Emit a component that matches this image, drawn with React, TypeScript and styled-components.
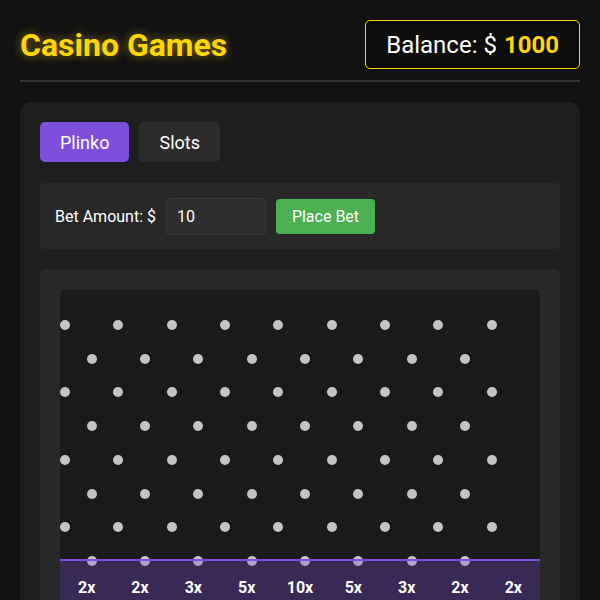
import styled, { createGlobalStyle } from "styled-components"

const GlobalStyle = createGlobalStyle`
    html, body {
        margin: 0;
        padding: 0;
        background: #121212;
        color: #ffffff;
        font-family: Roboto, "Liberation Sans", sans-serif;
    }
    * { box-sizing: border-box; }
`

const Page = styled.div`
    padding: 20px;
    height: 600px;
    overflow: hidden;
`

const Header = styled.header`
    display: flex;
    justify-content: space-between;
    align-items: center;
    padding-bottom: 11px;
    border-bottom: 2px solid #333;
    margin-bottom: 20px;

    h1 {
        margin: 0;
        font-size: 32px;
        font-weight: 700;
        color: #ffd700;
        text-shadow: 0 0 10px rgba(255, 215, 0, 0.5);
    }
`

const Balance = styled.div`
    height: 49px;
    padding: 0 20px;
    display: flex;
    align-items: center;
    border: 1px solid #ffd700;
    border-radius: 5px;
    background: #0d0d0d;
    font-size: 24px;

    span {
        color: #ffd700;
        font-weight: 700;
        margin-left: 7px;
    }
`

const Panel = styled.main`
    background: #1e1e1e;
    border-radius: 10px;
    padding: 20px;
    display: flex;
    flex-direction: column;
    gap: 20px;
`

const Tabs = styled.div`
    display: flex;
    gap: 10px;
    margin-bottom: 1px;
`

const Tab = styled.button<{ $active?: boolean }>`
    height: 40px;
    padding: 0 20px;
    border: none;
    border-radius: 5px;
    font-family: inherit;
    font-size: 18px;
    color: #fff;
    background: ${p => (p.$active ? "#7e4fdb" : "#2c2c2c")};
    cursor: pointer;
`

const BetBar = styled.div`
    background: #282828;
    border-radius: 5px;
    padding: 15px 15px 14px;
    display: flex;
    align-items: center;
    gap: 10px;

    label {
        font-size: 16px;
    }
`

const BetInput = styled.input`
    width: 100px;
    height: 37px;
    padding: 0 10px;
    background: #2e2e2e;
    border: 1px solid #3a3a3a;
    border-radius: 4px;
    color: #fff;
    font-family: inherit;
    font-size: 16px;
    outline: none;
`

const PlaceButton = styled.button`
    width: 99px;
    height: 35px;
    border: none;
    border-radius: 4px;
    background: #4caf50;
    color: #fff;
    font-family: inherit;
    font-size: 16px;
    cursor: pointer;
`

const BoardWrap = styled.div`
    background: #282828;
    border-radius: 5px;
    padding: 21px 20px 20px;
`

const Board = styled.div`
    background: #1a1a1a;
    border-radius: 5px;
    overflow: hidden;
`

const PegField = styled.div`
    position: relative;
    height: 269px;
`

const Peg = styled.div`
    position: absolute;
    width: 10px;
    height: 10px;
    margin: -5px 0 0 0;
    border-radius: 50%;
    background: #c4c4c4;
`

const Slots = styled.div`
    position: relative;
    display: grid;
    grid-template-columns: repeat(9, 1fr);
    height: 52px;
    border-top: 2px solid #7e4fdb;
    background: rgba(126, 79, 219, 0.3);
`

const Slot = styled.div`
    display: flex;
    align-items: center;
    justify-content: center;
    font-size: 16px;
    font-weight: 700;
    padding-top: 2px;
`

const ROWS = 8
const COL = 480 / 9
const multipliers = ["2x", "2x", "3x", "5x", "10x", "5x", "3x", "2x", "2x"]

const pegs: { x: number; y: number }[] = []
for (let r = 0; r < ROWS; r++) {
    const count = r % 2 === 0 ? 9 : 8
    for (let i = 0; i < count; i++) {
        pegs.push({ x: i * COL + (r % 2 ? COL / 2 : 0), y: 35 + r * 33.7 })
    }
}

const App = () => {
    return <Page>
        <GlobalStyle />
        <Header>
            <h1>Casino Games</h1>
            <Balance>Balance: $<span>1000</span></Balance>
        </Header>
        <Panel>
            <Tabs>
                <Tab $active>Plinko</Tab>
                <Tab>Slots</Tab>
            </Tabs>
            <BetBar>
                <label>Bet Amount: $</label>
                <BetInput defaultValue="10" />
                <PlaceButton>Place Bet</PlaceButton>
            </BetBar>
            <BoardWrap>
                <Board>
                    <PegField>
                        {pegs.map((p, i) => <Peg key={`peg-${i}`} style={{ left: p.x, top: p.y }} />)}
                    </PegField>
                    <Slots>
                        {multipliers.map((m, i) => <Slot key={`slot-${i}`}>{m}</Slot>)}
                    </Slots>
                </Board>
            </BoardWrap>
        </Panel>
    </Page>
}

export default App
